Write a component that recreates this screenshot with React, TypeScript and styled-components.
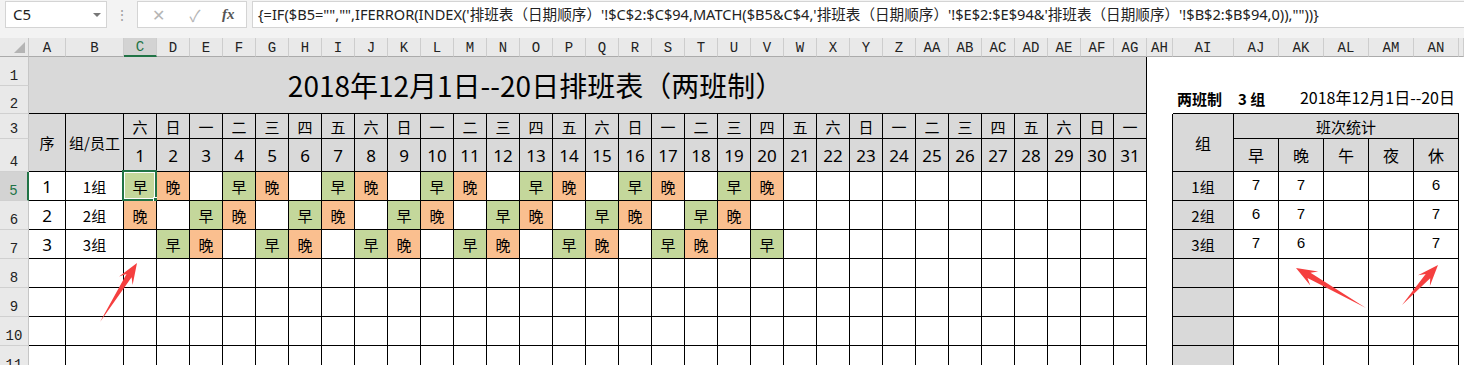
import React from "react";
import styled, { createGlobalStyle, css } from "styled-components";

const GlobalStyle = createGlobalStyle`
  html, body {
    margin: 0;
    padding: 0;
    background: #fff;
    overflow: hidden;
  }
  body {
    font-family: "Noto Sans", "Noto Sans CJK SC", sans-serif;
  }
`;

const FORMULA =
  "{=IF($B5=\"\",\"\",IFERROR(INDEX('排班表（日期顺序）'!$C$2:$C$94,MATCH($B5&C$4,'排班表（日期顺序）'!$E$2:$E$94&'排班表（日期顺序）'!$B$2:$B$94,0)),\"\"))}";

const WEEK = ["六", "日", "一", "二", "三", "四", "五"];
const DAYS = Array.from({ length: 31 }, (_, i) => i + 1);
const SHIFT_CYCLE = [
  ["早", "晚", ""],
  ["晚", "", "早"],
  ["", "早", "晚"],
];
const GROUPS = ["1组", "2组", "3组"];
const STAT_HEADS = ["早", "晚", "午", "夜", "休"];

// grid columns: 1 = row header, 2 = A, 3 = B, 4..34 = C..AG, 35 = AH, 36 = AI, 37..41 = AJ..AN, 42 = AO
const colName = (i: number) => {
  let n = i + 1;
  let s = "";
  while (n > 0) {
    const m = (n - 1) % 26;
    s = String.fromCharCode(65 + m) + s;
    n = Math.floor((n - 1) / 26);
  }
  return s;
};

const GREEN = "#c4d79b";
const ORANGE = "#fabf8f";
const GRAY = "#d9d9d9";
const EXCEL_GREEN = "#217346";

const shiftColor = (s: string) => (s === "早" ? GREEN : s === "晚" ? ORANGE : "#fff");

function countShift(g: number, kind: string) {
  let n = 0;
  for (let d = 1; d <= 20; d++) if (SHIFT_CYCLE[g][(d - 1) % 3] === kind) n++;
  return n;
}

function arrowPoints(tx: number, ty: number, px: number, py: number) {
  const dx = px - tx;
  const dy = py - ty;
  const len = Math.hypot(dx, dy);
  const ux = dx / len;
  const uy = dy / len;
  const nx = -uy;
  const ny = ux;
  const head = 21;
  const neck = 15;
  const hw = 8;
  const sw = 3;
  const bx = px - ux * head;
  const by = py - uy * head;
  const kx = px - ux * neck;
  const ky = py - uy * neck;
  return [
    [tx, ty],
    [kx + nx * sw, ky + ny * sw],
    [bx + nx * hw, by + ny * hw],
    [px, py],
    [bx - nx * hw, by - ny * hw],
    [kx - nx * sw, ky - ny * sw],
  ]
    .map((p) => p.map((v) => v.toFixed(1)).join(","))
    .join(" ");
}

const ARROWS = [
  [100, 322, 137, 263],
  [1366, 308, 1296, 268],
  [1402, 305, 1438, 265],
];

export default function App() {
  return (
    <Page>
      <GlobalStyle />
      <FormulaBar>
        <NameBox>
          C5
          <DropArrow />
        </NameBox>
        <Grip>⋮</Grip>
        <FxBox>
          <FxButton $muted>✕</FxButton>
          <FxButton $muted>✓</FxButton>
          <FxLabel>fx</FxLabel>
        </FxBox>
        <FormulaInput>{FORMULA}</FormulaInput>
      </FormulaBar>

      <Sheet>
        <Corner $c={1} $r={1}>
          <CornerMark />
        </Corner>
        {Array.from({ length: 41 }, (_, i) => (
          <ColHead key={i} $c={i + 2} $r={1} $sel={i === 2}>
            {i < 40 ? colName(i) : ""}
          </ColHead>
        ))}
        {Array.from({ length: 11 }, (_, i) => (
          <RowHead key={i} $c={1} $r={i + 2} $sel={i === 4}>
            {i + 1}
          </RowHead>
        ))}

        <TitleCell $c={2} $r={2} $cs={33} $rs={2}>
          2018年12月1日--20日排班表（两班制）
        </TitleCell>

        <InfoCell $c={36} $r={3} $cs={6}>
          <Bold>两班制</Bold>
          <Bold $gap>3 组</Bold>
          <InfoDate>2018年12月1日--20日</InfoDate>
        </InfoCell>
        <Spacer $c={35} $r={4} $rs={9} />

        <HeadCell $c={2} $r={4} $rs={2}>序</HeadCell>
        <HeadCell $c={3} $r={4} $rs={2}>组/员工</HeadCell>
        {DAYS.map((d) => (
          <React.Fragment key={d}>
            <HeadCell $c={d + 3} $r={4}>{WEEK[(d - 1) % 7]}</HeadCell>
            <HeadCell $c={d + 3} $r={5} $num>{d}</HeadCell>
          </React.Fragment>
        ))}

        {Array.from({ length: 7 }, (_, i) => {
          const g = i < 3 ? i : -1;
          return (
            <React.Fragment key={i}>
              <DataCell $c={2} $r={i + 6} $num>{g >= 0 ? g + 1 : ""}</DataCell>
              <DataCell $c={3} $r={i + 6}>{g >= 0 ? GROUPS[g] : ""}</DataCell>
              {DAYS.map((d) => {
                const s = g >= 0 && d <= 20 ? SHIFT_CYCLE[g][(d - 1) % 3] : "";
                return (
                  <DataCell key={d} $c={d + 3} $r={i + 6} $bg={shiftColor(s)} $sel={g === 0 && d === 1}>
                    {s}
                  </DataCell>
                );
              })}
              <HeadCell $c={36} $r={i + 6}>{g >= 0 ? GROUPS[g] : ""}</HeadCell>
              {STAT_HEADS.map((k, j) => {
                let v = "";
                if (g >= 0) {
                  if (k === "早" || k === "晚") v = String(countShift(g, k));
                  if (k === "休") v = String(countShift(g, ""));
                }
                return (
                  <StatCell key={k} $c={37 + j} $r={i + 6}>
                    {v}
                  </StatCell>
                );
              })}
            </React.Fragment>
          );
        })}

        <HeadCell $c={36} $r={4} $rs={2} $big>组</HeadCell>
        <HeadCell $c={37} $r={4} $cs={5}>班次统计</HeadCell>
        {STAT_HEADS.map((k, j) => (
          <HeadCell key={k} $c={37 + j} $r={5} $big>
            {k}
          </HeadCell>
        ))}
      </Sheet>

      <Overlay width="1464" height="365" viewBox="0 0 1464 365">
        {ARROWS.map(([tx, ty, px, py], i) => (
          <polygon key={i} points={arrowPoints(tx, ty, px, py)} fill="#f53f3f" />
        ))}
      </Overlay>
    </Page>
  );
}

const Page = styled.div`
  position: relative;
  width: 1464px;
  height: 365px;
  overflow: hidden;
  display: flex;
  flex-direction: column;
`;

const FormulaBar = styled.div`
  height: 38px;
  flex: none;
  background: #f3f3f3;
  display: flex;
  align-items: flex-start;
  padding-top: 1px;
  box-sizing: border-box;
  font-family: "Noto Sans", "Noto Sans CJK SC", sans-serif;
`;

const NameBox = styled.div`
  position: relative;
  margin-left: 5px;
  width: 102px;
  height: 27px;
  box-sizing: border-box;
  background: #fff;
  border: 1px solid #d4d4d4;
  font-size: 15px;
  line-height: 25px;
  padding-left: 7px;
  color: #222;
`;

const DropArrow = styled.span`
  position: absolute;
  right: 5px;
  top: 11px;
  border-left: 4px solid transparent;
  border-right: 4px solid transparent;
  border-top: 4px solid #777;
`;

const Grip = styled.div`
  width: 30px;
  text-align: center;
  font-size: 14px;
  line-height: 27px;
  color: #a0a0a0;
`;

const FxBox = styled.div`
  width: 110px;
  height: 27px;
  box-sizing: border-box;
  background: #fff;
  border: 1px solid #d4d4d4;
  display: flex;
  align-items: center;
  padding-left: 10px;
  gap: 17px;
`;

const FxButton = styled.span<{ $muted?: boolean }>`
  width: 20px;
  text-align: center;
  font-size: 16px;
  color: ${({ $muted }) => ($muted ? "#b5b5b5" : "#444")};
`;

const FxLabel = styled.span`
  font-family: "Liberation Serif", serif;
  font-style: italic;
  font-weight: bold;
  font-size: 15px;
  color: #555;
`;

const FormulaInput = styled.div`
  margin-left: 5px;
  flex: 1;
  height: 27px;
  box-sizing: border-box;
  background: #fff;
  border: 1px solid #d4d4d4;
  border-right: none;
  font-size: 14.6px;
  line-height: 25px;
  padding-left: 5px;
  white-space: nowrap;
  overflow: hidden;
  color: #222;
`;

const Sheet = styled.div`
  display: grid;
  grid-template-columns: 29px 37px 58px repeat(31, 33px) 26px 61px repeat(5, 45px) 1fr;
  grid-template-rows: 19px 29px 28px 25px 33px repeat(7, 29px);
  background: #fff;
`;

type Place = { $c: number; $r: number; $cs?: number; $rs?: number };

const GridCell = styled.div<Place>`
  grid-column: ${({ $c, $cs }) => `${$c} / span ${$cs ?? 1}`};
  grid-row: ${({ $r, $rs }) => `${$r} / span ${$rs ?? 1}`};
  box-sizing: border-box;
  min-width: 0;
  display: flex;
  align-items: center;
  justify-content: center;
  white-space: nowrap;
`;

const Corner = styled(GridCell)`
  position: relative;
  background: #e9e9e9;
  border-right: 1px solid #c6c6c6;
  border-bottom: 1px solid #ababab;
`;

const CornerMark = styled.span`
  position: absolute;
  right: 3px;
  bottom: 3px;
  width: 0;
  height: 0;
  border-left: 11px solid transparent;
  border-bottom: 11px solid #b4b4b4;
`;

const ColHead = styled(GridCell)<{ $sel?: boolean }>`
  background: ${({ $sel }) => ($sel ? "#d3d3d3" : "#e9e9e9")};
  border-right: 1px solid #cdcdcd;
  border-bottom: ${({ $sel }) => ($sel ? `2px solid ${EXCEL_GREEN}` : "1px solid #ababab")};
  color: ${({ $sel }) => ($sel ? EXCEL_GREEN : "#222")};
  font-family: "Liberation Mono", monospace;
  font-size: 14px;
  padding-top: 1px;
`;

const RowHead = styled(GridCell)<{ $sel?: boolean }>`
  background: ${({ $sel }) => ($sel ? "#d3d3d3" : "#e9e9e9")};
  border-right: ${({ $sel }) => ($sel ? `2px solid ${EXCEL_GREEN}` : "1px solid #c6c6c6")};
  border-bottom: 1px solid #d0d0d0;
  color: ${({ $sel }) => ($sel ? EXCEL_GREEN : "#222")};
  font-family: "Liberation Mono", monospace;
  font-size: 14px;
  align-items: flex-end;
  padding-bottom: 1px;
`;

const lined = css`
  border-right: 1px solid #000;
  border-bottom: 1px solid #000;
`;

const TitleCell = styled(GridCell)`
  ${lined};
  background: ${GRAY};
  font-family: "Noto Sans CJK SC", sans-serif;
  font-size: 28px;
  color: #000;
  padding-right: 104px;
`;

const InfoCell = styled(GridCell)`
  border-bottom: 1px solid #000;
  justify-content: flex-start;
  align-items: flex-end;
  padding: 0 4px 4px 4px;
  font-family: "Noto Sans CJK SC", sans-serif;
  color: #000;
`;

const Bold = styled.span<{ $gap?: boolean }>`
  font-weight: bold;
  font-size: 15px;
  margin-left: ${({ $gap }) => ($gap ? "16px" : "0")};
`;

const InfoDate = styled.span`
  margin-left: auto;
  font-size: 16px;
`;

const Spacer = styled(GridCell)`
  border-right: 1px solid #000;
`;

const HeadCell = styled(GridCell)<{ $num?: boolean; $big?: boolean }>`
  ${lined};
  background: ${GRAY};
  font-family: ${({ $num }) => ($num ? `"Noto Sans", sans-serif` : `"Noto Sans CJK SC", sans-serif`)};
  font-size: ${({ $num, $big }) => ($num ? "17px" : $big ? "16px" : "15px")};
  color: #000;
`;

const DataCell = styled(GridCell)<{ $bg?: string; $num?: boolean; $sel?: boolean }>`
  ${lined};
  position: relative;
  background: ${({ $bg }) => $bg ?? "#fff"};
  font-family: ${({ $num }) => ($num ? `"Noto Sans", sans-serif` : `"Noto Sans CJK SC", sans-serif`)};
  font-size: ${({ $num }) => ($num ? "17px" : "15px")};
  color: #000;
  ${({ $sel }) =>
    $sel &&
    css`
      &::before {
        content: "";
        position: absolute;
        left: -2px;
        top: -2px;
        right: -1px;
        bottom: -1px;
        border: 2px solid ${EXCEL_GREEN};
        box-shadow: inset 0 0 0 1px #fff;
      }
      &::after {
        content: "";
        position: absolute;
        right: -4px;
        bottom: -4px;
        width: 5px;
        height: 5px;
        background: ${EXCEL_GREEN};
        border: 1px solid #fff;
      }
    `}
`;

const StatCell = styled(GridCell)`
  ${lined};
  background: #fff;
  font-family: "Liberation Mono", monospace;
  font-size: 15px;
  color: #000;
`;

const Overlay = styled.svg`
  position: absolute;
  left: 0;
  top: 0;
  pointer-events: none;
`;
